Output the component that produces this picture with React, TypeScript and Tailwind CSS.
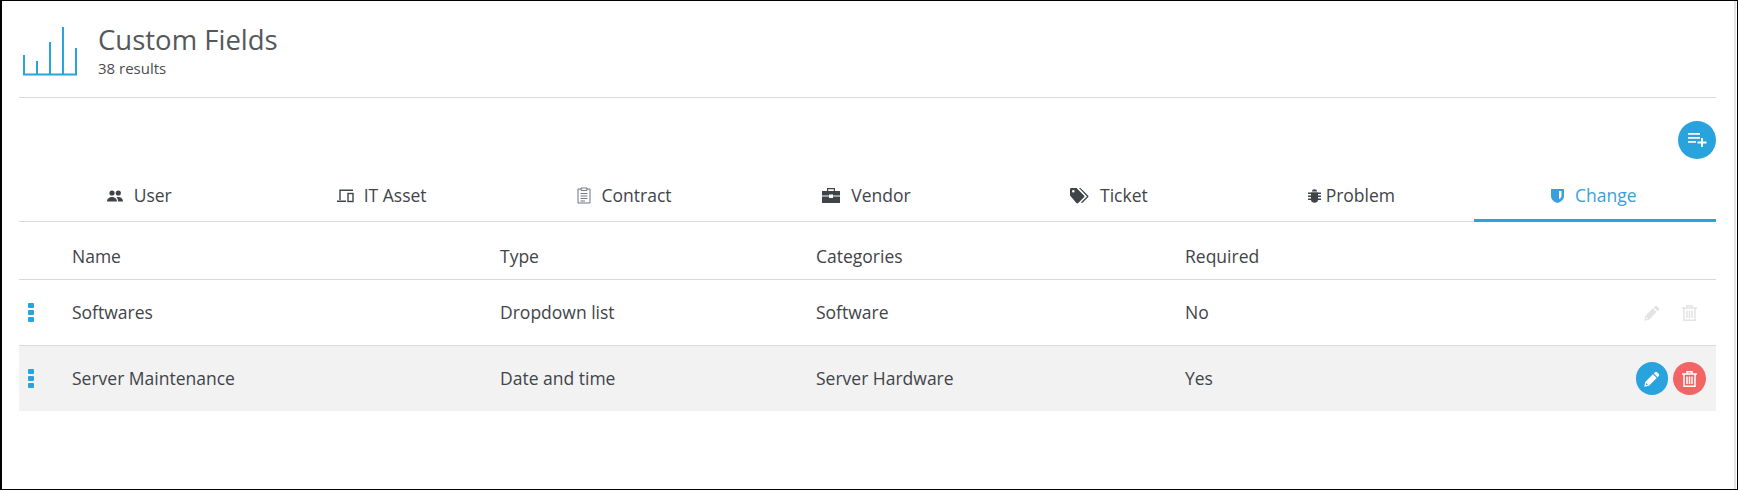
import React, { FC } from 'react';

const ChartIcon = () => (
  <svg width="54" height="49" viewBox="0 0 54 49" fill="none" stroke="#29a3dd" strokeWidth="2">
    <path d="M1 28V47.500H53V21M14 47.500V34M27 47.500V15M40 47.500V0" />
  </svg>
);

const UserIcon = () => (
  <svg width="16" height="12" viewBox="0 0 16 12" fill="currentColor">
    <circle cx="5" cy="3" r="2.6" />
    <circle cx="11.3" cy="3" r="2.6" />
    <path d="M0 11.5C0 8.5 2.5 7 5 7s5 1.5 5 4.5ZM11 11.5C11 9.500 10.500 8 9.500 7.200c2.900-.6 6.500.6 6.500 4.300Z" />
  </svg>
);

const AssetIcon = () => (
  <svg width="17" height="14" viewBox="0 0 17 14" fill="none" stroke="currentColor" strokeWidth="1.4">
    <path d="M3 11V1.200H16M0 12.300H9" />
    <rect x="11" y="4.500" width="5" height="8" />
  </svg>
);

const ContractIcon = () => (
  <svg width="14" height="17" viewBox="0 0 14 17" fill="none" stroke="#6f7780" strokeWidth="1">
    <path d="M4 2H1V16H13V2H10M4 1H10V3.500H4ZM3.500 6.500H10.500M3.500 9H10.500M3.500 11.500H10.500M3.500 14H8" />
  </svg>
);

const VendorIcon = () => (
  <svg width="18" height="15" viewBox="0 0 18 15" fill="currentColor">
    <path d="M5 3V0h8v3h-1.200V1.200H6.200V3Z" />
    <path d="M0 3h18v4.500h-7V6.500H7v1H0ZM0 8.500h7V10h4V8.500h7V15H0Z" />
  </svg>
);

const TicketIcon = () => (
  <svg width="20" height="16" viewBox="0 0 20 16" fill="currentColor">
    <path d="M0 1.300C0 .6.600 0 1.300 0H6.500L14 7.500c.5.500.5 1.300 0 1.800l-5.800 5.800c-.5.500-1.300.5-1.800 0L0 7.500ZM3.300 2a1.300 1.300 0 1 0 0 2.600 1.300 1.300 0 0 0 0-2.600Z" fillRule="evenodd" />
    <path d="M9 0h1.500l7.500 7.500c.6.600.6 1.300 0 1.800l-6 6-1-1 6-5.900Z" />
  </svg>
);

const BugIcon = () => (
  <svg width="13" height="14" viewBox="0 0 13 14" fill="currentColor">
    <path d="M4 2.500C4 1 5 .3 6.500.3S9 1 9 2.500Z" />
    <path d="M0 3.500h13v1.500H0ZM0 6.500h13V8H0ZM0 9.500h13V11H0Z" />
    <path d="M3 3.500h7v7.500C10 12.800 8.300 13.800 6.500 13.800S3 12.800 3 11Z" />
  </svg>
);

const ShieldIcon = () => (
  <svg width="13" height="15" viewBox="0 0 13 15" fill="currentColor">
    <path d="M0 1h13v7c0 3.500-3 5.800-6.500 7C3 13.800 0 11.500 0 8ZM8 3v8.200C9.600 10.300 10.500 9.200 10.500 8V3Z" fillRule="evenodd" />
  </svg>
);

const AddListIcon = () => (
  <svg width="19" height="14" viewBox="0 0 19 14" fill="white">
    <path d="M0 0h12v1.800H0ZM0 4h12v1.800H0ZM0 8h8v1.800H0ZM13 5h2v3.500h3.500v2H15V14h-2v-3.500H9.500v-2H13Z" />
  </svg>
);

const PencilIcon = () => (
  <svg width="16" height="16" viewBox="0 0 16 16" fill="currentColor">
    <path d="M11 1.200Q12 .2 13 1.200L14.800 3Q15.800 4 14.800 5L13.600 6.200 9.800 2.400Z" />
    <path d="M8.900 3.300 12.700 7.100 5 14.800 .3 15.700 1.200 11ZM2.200 12 1.800 14.200 4 13.800Z" fillRule="evenodd" />
  </svg>
);

const TrashIcon = () => (
  <svg width="15" height="16" viewBox="0 0 15 16" fill="none" stroke="currentColor" strokeWidth="1.500">
    <path d="M0 3H15M5 3V.8H10V3M2 3V15.200H13V3M5 5.500V13M7.500 5.500V13M10 5.500V13" />
  </svg>
);

const DragHandle = () => (
  <div className="flex flex-col gap-[2px]">
    <span className="w-[6px] h-[5px] rounded-[1px] bg-[#29a3dd]" />
    <span className="w-[6px] h-[5px] rounded-[1px] bg-[#29a3dd]" />
    <span className="w-[6px] h-[5px] rounded-[1px] bg-[#29a3dd]" />
  </div>
);

const tabs = [
  { label: 'User', icon: <UserIcon />, gap: 'gap-[11px]' },
  { label: 'IT Asset', icon: <AssetIcon />, gap: 'gap-[10px]' },
  { label: 'Contract', icon: <ContractIcon />, gap: 'gap-[11px]' },
  { label: 'Vendor', icon: <VendorIcon />, gap: 'gap-[11px]' },
  { label: 'Ticket', icon: <TicketIcon />, gap: 'gap-[10px]' },
  { label: 'Problem', icon: <BugIcon />, gap: 'gap-[5px]' },
  { label: 'Change', icon: <ShieldIcon />, gap: 'gap-[11px]', active: true },
];

const rows = [
  { name: 'Softwares', type: 'Dropdown list', category: 'Software', required: 'No' },
  { name: 'Server Maintenance', type: 'Date and time', category: 'Server Hardware', required: 'Yes', hover: true },
];

const gridCols = 'grid grid-cols-[428px_316px_369px_1fr] pl-[53px]';

const App: FC = () => {
  return (
    <div className="w-[1738px] h-[490px] bg-white border-l-2 border-t border-r border-b border-black font-['Open_Sans',sans-serif] text-[#3f4449] overflow-hidden">
      <div className="w-[1734px] h-full border-r-2 border-[#e2e2e2] pl-[17px] pr-[18px]">
        <div className="flex items-start h-[97px] border-b border-[#d9d9d9] pt-[26px] pl-[4px]">
          <ChartIcon />
          <div className="ml-[21px] -mt-[6px]">
            <div className="text-[27.5px] leading-[38px] text-[#55585b]">Custom Fields</div>
            <div className="text-[15px] leading-[18px] text-[#4a4d50]">38 results</div>
          </div>
        </div>

        <div className="flex justify-end pt-[23px]">
          <button className="w-[38px] h-[38px] rounded-full bg-[#29a3dd] flex items-center justify-center">
            <AddListIcon />
          </button>
        </div>

        <div className="flex h-[63px] border-b border-[#d9d9d9]">
          {tabs.map((tab) => (
            <div
              key={tab.label}
              className={`flex-1 flex items-center justify-center pt-[13px] pr-[2px] border-b-[3px] -mb-px text-[17.5px] ${tab.gap} ${
                tab.active ? 'text-[#3a9fdc] border-[#29a3dd]' : 'border-transparent'
              }`}
            >
              {tab.icon}
              <span>{tab.label}</span>
            </div>
          ))}
        </div>

        <div className={`${gridCols} h-[58px] items-center pt-[11px] border-b border-[#d9d9d9] text-[17.5px]`}>
          <span>Name</span>
          <span>Type</span>
          <span>Categories</span>
          <span>Required</span>
        </div>

        {rows.map((row) => (
          <div
            key={row.name}
            className={`relative ${gridCols} items-center text-[17.5px] ${
              row.hover ? 'h-[65px] bg-[#f2f2f2]' : 'h-[66px] border-b border-[#d9d9d9]'
            }`}
          >
            <div className="absolute left-[9px] top-[23px]">
              <DragHandle />
            </div>
            <span>{row.name}</span>
            <span>{row.type}</span>
            <span>{row.category}</span>
            <span>{row.required}</span>
            <div className="absolute right-[10px] top-[16px] flex items-center gap-[5px]">
              {row.hover ? (
                <>
                  <span className="w-[32px] h-[33px] rounded-full bg-[#29a3dd] text-white flex items-center justify-center">
                    <PencilIcon />
                  </span>
                  <span className="w-[33px] h-[33px] rounded-full bg-[#f16565] text-white flex items-center justify-center">
                    <TrashIcon />
                  </span>
                </>
              ) : (
                <>
                  <span className="w-[32px] h-[33px] text-[#e3e3e3] flex items-center justify-center">
                    <PencilIcon />
                  </span>
                  <span className="w-[33px] h-[33px] text-[#e3e3e3] flex items-center justify-center">
                    <TrashIcon />
                  </span>
                </>
              )}
            </div>
          </div>
        ))}
      </div>
    </div>
  );
};

export default App;
